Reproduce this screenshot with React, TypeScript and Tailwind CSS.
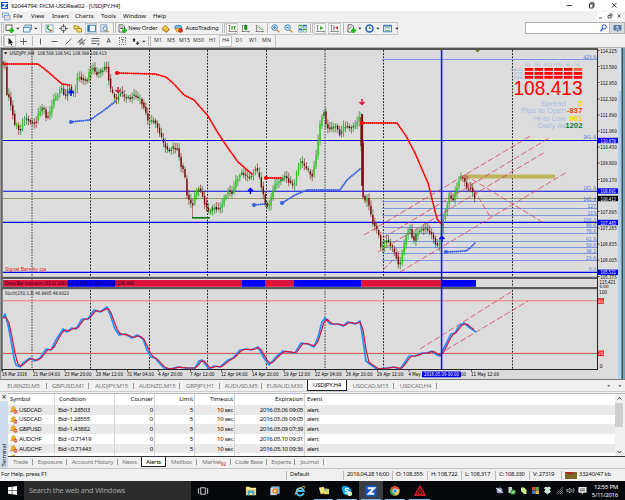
import React from 'react';
import { clsx } from 'clsx';

const PRICE_PATH: [number, number][] = [
  [3, 62], [6, 66], [7, 92], [10, 98], [12, 107], [14, 115], [16, 127], [18, 124], [20, 130], [22, 130], [24, 122],
  [28, 118], [33, 123], [37, 122], [40, 112], [44, 106], [47, 117], [50, 116], [54, 100], [58, 96], [62, 87], [66, 97],
  [70, 86], [73, 95], [77, 87], [79, 75], [83, 80], [88, 80], [91, 70], [94, 68], [97, 75], [101, 71], [105, 69],
  [107, 64], [109, 75], [111, 88], [114, 94], [118, 101], [121, 92], [126, 97], [131, 98], [136, 95], [141, 99],
  [145, 108], [149, 120], [155, 121], [160, 131], [164, 142], [169, 152], [174, 147], [179, 149], [181, 165],
  [185, 170], [188, 195], [190, 200], [193, 207], [196, 194], [200, 187], [203, 195], [206, 205], [210, 212],
  [214, 207], [220, 210], [224, 201], [229, 191], [233, 193], [237, 180], [243, 173], [248, 176], [252, 178],
  [256, 167], [260, 175], [263, 190], [267, 207], [270, 205], [273, 193], [277, 183], [281, 181], [285, 175],
  [290, 182], [294, 186], [298, 172], [301, 162], [307, 167], [313, 177], [316, 163], [319, 140], [322, 118],
  [325, 112], [327, 126], [331, 129], [336, 125], [341, 135], [345, 125], [350, 128], [355, 127], [360, 118],
  [361.5, 115], [363, 188], [365, 204], [368, 197], [371, 210], [373, 222], [377, 228], [380, 235], [382, 250],
  [385, 245], [388, 240], [393, 247], [397, 256], [400, 268], [404, 250], [407, 235], [409, 230], [412, 230],
  [414, 243], [418, 232], [422, 230], [427, 228], [431, 232], [435, 240], [438, 247], [441, 242], [443, 225],
  [446, 214], [448, 205], [450, 195], [454, 200], [457, 190], [460, 180], [463, 175], [466, 182], [468, 190],
  [471, 187], [476, 198],
];

const STOCH: [number, number][] = [
  [3, 318], [5, 314], [8, 325], [11, 340], [14, 358], [16, 365], [20, 367], [23, 363], [30, 358], [35, 361], [40, 358],
  [46, 349], [51, 350], [56, 340], [63, 329], [67, 332], [72, 328], [76, 329], [82, 319], [88, 319], [94, 310],
  [100, 312], [107, 307], [111, 317], [115, 329], [119, 335], [125, 334], [132, 338], [137, 335], [143, 339],
  [147, 350], [151, 357], [155, 358], [160, 364], [164, 368], [170, 369], [178, 367], [185, 368], [195, 368],
  [199, 361], [202, 360], [205, 364], [209, 369], [214, 366], [220, 367], [228, 360], [233, 358], [240, 350],
  [246, 349], [251, 350], [258, 347], [264, 358], [269, 365], [276, 357], [283, 351], [295, 353], [301, 343],
  [308, 344], [314, 347], [318, 337], [322, 322], [325, 318], [330, 324], [338, 324], [343, 326], [348, 322],
  [355, 324], [360, 321], [363, 340], [366, 361], [371, 365], [377, 369], [387, 368], [393, 367], [400, 369],
  [405, 362], [409, 356], [415, 356], [422, 353], [427, 353], [432, 351], [437, 355], [440, 356], [443, 350],
  [447, 342], [451, 334], [455, 333], [459, 326], [464, 323], [470, 328], [476, 332],
];

function at(path: [number, number][], x: number) {
  for (let i = 1; i < path.length; i++) {
    const [x1, y1] = path[i];
    if (x <= x1) {
      const [x0, y0] = path[i - 1];
      return y0 + ((y1 - y0) * (Math.max(x, x0) - x0)) / (x1 - x0);
    }
  }
  return path[path.length - 1][1];
}

const BARS = Array.from({ length: 242 }, (_, i) => {
  const x = 3 + i * 1.957;
  const open = at(PRICE_PATH, x - 1) + Math.sin(i * 7.3) * 0.9;
  const close = at(PRICE_PATH, x + 1) + Math.sin(i * 4.1) * 1.1;
  const up = close < open;
  const top = Math.min(open, close);
  const h = Math.max(1.4, Math.abs(close - open));
  const strong = Math.abs(at(PRICE_PATH, x + 3) - at(PRICE_PATH, x - 3)) > 6;
  const fill = up ? (strong ? '#2fd01c' : '#1c7d1c') : i % 4 === 1 && !strong ? '#111' : '#7c0d0d';
  return { x, top, h, fill, wick: up || i % 3 === 0 ? '#2f8f2f' : '#8c3a34', up: 1.5 + Math.abs(Math.sin(i * 2.7)) * 4, dn: 1 + Math.abs(Math.cos(i * 3.9)) * 4 };
});

const SIGNAL = Array.from({ length: 158 }, (_, i) => {
  const x = 3 + i * 3;
  const y = (at(STOCH, x - 3) + at(STOCH, x - 2) + at(STOCH, x)) / 3;
  return `${x},${y.toFixed(1)}`;
}).join(' ');

const GRID = [90.5, 149.5, 207.5, 266.5, 383.5, 512.5];

const FIBS: [number, string][] = [
  [59.5, '423.6'], [201.5, '141.4'], [208.5, '127'], [215.5, '113'], [222.5, '100.0'], [227.5, '88.6'],
  [233.5, '78.6'], [241.5, '61.8'], [247.5, '50.0'], [253.5, '38.2'], [260.5, '23.6'],
];

const PRICES: [number, string][] = [
  [50.5, '114.225'], [66.5, '113.580'], [82.5, '112.950'], [99, '112.320'], [115, '111.690'], [131, '111.060'],
  [147, '110.430'], [163, '109.800'], [179.5, '109.170'], [211.5, '107.895'], [228, '107.265'],
  [244, '106.635'], [260, '106.005'], [276.5, '105.375'],
];

const PRICE_TAGS: [number, string, string][] = [
  [140.5, '110.678', '#0000f0'], [191, '108.691', '#0000f0'], [198.5, '108.413', '#000'],
  [222.5, '107.465', '#0000f0'], [272.3, '105.521', '#0000f0'],
];

const DATES: [number, string, number][] = [
  [2, '16 Mar 2016', 25], [33, '21 Mar 04:00', 27], [64.5, '23 Mar 20:00', 27], [96, '28 Mar 12:00', 27],
  [127, '31 Mar 04:00', 27], [158, '4 Apr 20:00', 24.5], [190, '7 Apr 12:00', 24.5], [221, '12 Apr 04:00', 26.5],
  [252, '14 Apr 20:00', 26.5], [283.5, '19 Apr 12:00', 26.5], [315, '22 Apr 04:00', 26.5], [346, '26 Apr 20:00', 26.5],
  [377, '29 Apr 12:00', 26.5], [408.5, '4 May', 12], [471, '11 May 12:00', 28],
];

const TRENDS: [number, number, number, number][] = [
  [364, 235, 532, 135], [383, 238, 549, 138], [378, 252, 545, 152], [400, 272, 567, 172],
  [383, 270, 402, 251], [465, 175, 544, 223], [465, 175, 491, 218], [420, 349, 511, 292], [446, 350, 528, 301],
];

const DOTTED: [string, string, boolean][] = [
  ['3,64 38,64 47,71 62,84 70,85', '#ff0000', false],
  ['117,73 155,74 166,77 174,84 184,95 194,100 208,116 218,133 228,148 238,162 252,174', '#ff0000', true],
  ['266,178 281,178', '#ff0000', true],
  ['362,123 397,123 406,136 415,153 428,183 434,207 437,219 443,226', '#ff0000', true],
  ['71,122 79,121 90,120 103,111 116,101', '#3a62e0', true],
  ['254,205 265,204', '#3a62e0', true],
  ['282,203 295,195 307,190 340,190 347,180 360,169', '#3a62e0', true],
  ['446,252 466,251 470,248 476,242', '#3a62e0', true],
];

const DEEP: [number, number, string][] = [
  [3, 68, '#dc143c'], [68, 115, '#0000ff'], [115, 242, '#dc143c'], [242, 265, '#0000ff'], [265, 294, '#dc143c'],
  [294, 361, '#0000ff'], [361, 441, '#dc143c'], [441, 476, '#0000ff'],
];

const STATS: [string, string, string][] = [
  ['Spread', '5', '#ffd700'], ['Pips to Open', '-837', '#ff4500'], ['Hi to Low', '961', '#ffd700'], ['Daily Av', '1202', '#0b7a3c'],
];

const ALERTS = [
  ['USDCAD', 'Bid>1.28503', '2016.05.06 09:05'],
  ['USDCAD', 'Bid>1.28555', '2016.05.06 09:05'],
  ['GBPUSD', 'Bid>1.43882', '2016.05.09 07:39'],
  ['AUDCHF', 'Bid <0.71419', '2016.05.10 09:31'],
  ['AUDCHF', 'Bid <0.71443', '2016.05.10 09:36'],
  ['EURUSD', 'Bid>1.15280', '2016.05.10 10:12'],
];

function Chart() {
  return (
    <svg className="block w-[625px] h-[332px] shrink-0" viewBox="0 48 625 332" fontFamily="'DejaVu Sans Condensed','DejaVu Sans',sans-serif">
      <rect x="0" y="48" width="625" height="332" fill="#dcdcdc" />
      <rect x="0" y="48" width="598" height="2" fill="#555" />
      <rect x="0" y="48" width="1.2" height="332" fill="#999" />
      <rect x="1.2" y="48" width="1.4" height="323" fill="#4a4a4a" />

      {[32, 325].map(x => (
        <line key={x} x1={x} x2={x} y1="50" y2="369" stroke="#777" strokeWidth="1.6" strokeDasharray="1.6 1.2" />
      ))}
      {GRID.map(x => (
        <line key={x} x1={x} x2={x} y1="50" y2="369" stroke="#222" strokeWidth="1" strokeDasharray="1.8 1.4" />
      ))}

      <line x1="3" x2="597" y1="198.5" y2="198.5" stroke="#8a8a4a" strokeWidth="0.8" />
      {FIBS.map(([y, label]) => (
        <g key={label}>
          <line x1="382" x2="597" y1={y} y2={y} stroke="#6f8fdc" strokeWidth="0.9" />
          <text x="596" y={y - 0.8} fontSize="5" textAnchor="end" fill="#4a6fd8">{label}</text>
        </g>
      ))}
      {[139.6, 192.2].map(y => <line key={y} x1="3" x2="597" y1={y - 0.4} y2={y - 0.4} stroke="#f4f4c8" strokeWidth="0.8" />)}
      {[140.5, 191.3, 222.4, 272.4].map(y => (
        <line key={y} x1="3" x2="598" y1={y} y2={y} stroke="#0000e8" strokeWidth="1.1" />
      ))}
      <text x="596" y="139.4" fontSize="5" textAnchor="end" fill="#4a6fd8">261.8</text>
      <text x="596" y="190" fontSize="5" textAnchor="end" fill="#4a6fd8">161.8</text>
      <text x="596" y="271.2" fontSize="5" textAnchor="end" fill="#4a6fd8">0.0</text>

      <rect x="465" y="174.5" width="90" height="4" fill="#bdb45c" />

      {BARS.map(b => (
        <g key={b.x}>
          <line x1={b.x} x2={b.x} y1={b.top - b.up} y2={b.top + b.h + b.dn} stroke={b.wick} strokeWidth="0.75" />
          <rect x={b.x - 0.7} y={b.top} width="1.4" height={b.h} fill={b.fill} />
        </g>
      ))}
      <rect x="361.2" y="114" width="1.9" height="72" fill="#7c0d0d" />
      <line x1="192.5" x2="192.5" y1="205" y2="217" stroke="#b04040" strokeWidth="0.7" />
      <rect x="192" y="217" width="18" height="1.6" fill="#0a7a0a" />

      {DOTTED.map(([pts, color, dot]) => (
        <g key={pts}>
          <polyline points={pts} fill="none" stroke={color} strokeWidth="1" opacity="0.45" />
          <polyline points={pts} fill="none" stroke={color} strokeWidth="1.9" strokeLinecap="round" strokeDasharray="0.1 2" />
          {dot && <circle cx={pts.split(',')[0]} cy={pts.split(',')[1].split(' ')[0]} r="2.1" fill={color} />}
        </g>
      ))}

      {TRENDS.map(([x1, y1, x2, y2]) => (
        <line key={`${x1}-${y1}-${x2}`} x1={x1} y1={y1} x2={x2} y2={y2} stroke="#d9405a" strokeWidth="0.8" strokeDasharray="6 2.5" />
      ))}

      {[[118, 90], [362, 102]].map(([x, y]) => (
        <path key={x} d={`M${x} ${y - 3}v5M${x - 2.5} ${y}l2.5 2.5 2.5-2.5`} fill="none" stroke="#dc143c" strokeWidth="1.5" />
      ))}
      {[[71, 93], [250.5, 191], [442, 239]].map(([x, y]) => (
        <path key={x} d={`M${x} ${y + 3}v-5M${x - 2.5} ${y}l2.5-2.5 2.5 2.5`} fill="none" stroke="#0000ff" strokeWidth="1.5" />
      ))}
      <path d="M475 50h5l-2.5 2.5z" fill="#7d7d20" />

      <path d="M4 52.300h3.400l-1.700 2.200z" fill="#111" />
      <text x="9.500" y="55.2" fontSize="5.2" fill="#111" textLength="25" lengthAdjust="spacingAndGlyphs">USDJPY,H4</text>
      <text x="37.500" y="55.2" fontSize="5.2" fill="#111" textLength="69" lengthAdjust="spacingAndGlyphs">108.508 108.541 108.399 108.413</text>
      <text x="5" y="271" fontSize="5.8" fill="#e01818" textLength="41" lengthAdjust="spacingAndGlyphs" fontFamily="'Liberation Sans',sans-serif">Signal Bars by cja</text>

      <g fontFamily="'Liberation Sans',sans-serif">
        {['M1', 'M5', 'M15', 'M30', 'H1', 'H4'].map((t, i) => (
          <g key={t}>
            <text x={527.8 + i * 10} y="65.7" fontSize="4" textAnchor="middle" fill="#a3b8d6">{t}</text>
            {[68, 72, 75.9].map(y => (
              <rect key={y} x={524.8 + i * 9.8} y={y} width="8.4" height="2.8" fill={i === 5 && y === 68 ? '#ff5533' : '#ff0000'} />
            ))}
          </g>
        ))}
        {['MACD', 'STR', 'EMA'].map((t, i) => (
          <text key={t} x="522.5" y={71 + i * 4} fontSize="4" textAnchor="end" fill="#a3b8d6">{t}</text>
        ))}
        <text x="513.5" y="95.4" fontSize="20" fill="#ff0000" textLength="69" lengthAdjust="spacingAndGlyphs">108.413</text>
        {STATS.map(([label, value, color], i) => (
          <g key={label} fontSize="7.8">
            <text x="566" y={106 + i * 7.3} textAnchor="end" fill="#a9bfdf">{label}</text>
            <text x="582.5" y={106 + i * 7.3} textAnchor="end" fill={color} fontWeight="bold">{value}</text>
          </g>
        ))}
      </g>

      {/* Deep bar indicator */}
      <rect x="2" y="276.8" width="596" height="2.2" fill="#5a5a5a" />
      {DEEP.map(([x0, x1, fill]) => <rect key={x0} x={x0} y="280" width={x1 - x0} height="6.8" fill={fill} />)}
      <rect x="2" y="287" width="596" height="2.2" fill="#5a5a5a" />
      <text x="5" y="285.2" fontSize="5" fill="#150018" textLength="129" lengthAdjust="spacingAndGlyphs">Deep Bar Indicator (33.1) 106.960 -1.000 -1.000 -1.000 106.960</text>

      {/* Stochastic */}
      <line x1="3" x2="597" y1="300.8" y2="300.8" stroke="#ee7a7a" strokeWidth="1" />
      <line x1="3" x2="597" y1="354.4" y2="354.4" stroke="#a9e4e4" strokeWidth="0.9" />
      <line x1="3" x2="597" y1="353.4" y2="353.4" stroke="#e84848" strokeWidth="1" />
      <polyline points={STOCH.map(p => p.join(',')).join(' ')} fill="none" stroke="#1e90ff" strokeWidth="1.7" strokeLinejoin="round" />
      <polyline points={SIGNAL} fill="none" stroke="#dc143c" strokeWidth="1.2" />
      <text x="5" y="294.8" fontSize="5.2" fill="#111" textLength="64" lengthAdjust="spacingAndGlyphs">Stoch(150,3,3) 46.9905 48.6023</text>

      <rect x="440.8" y="50" width="1.6" height="319" fill="#1616e8" />
      <line x1="2" x2="598" y1="369.5" y2="369.5" stroke="#222" />
      <line x1="597.5" x2="597.5" y1="49" y2="370" stroke="#222" />

      <g fontSize="5.5">
        {PRICES.map(([y, label]) => (
          <g key={label}>
            <line x1="598" x2="599.5" y1={y} y2={y} stroke="#222" strokeWidth="0.8" />
            <text x="600.2" y={y + 2} fill="#000" textLength="16.5" lengthAdjust="spacingAndGlyphs">{label}</text>
          </g>
        ))}
        {PRICE_TAGS.map(([y, label, fill]) => (
          <g key={label}>
            <rect x="598" y={y - 2.7} width="20" height="5.4" fill={fill} />
            <text x="600.5" y={y + 2} fill="#fff" textLength="15.5" lengthAdjust="spacingAndGlyphs">{label}</text>
          </g>
        ))}
        <text x="599.5" y="283.8" fill="#000" textLength="16" lengthAdjust="spacingAndGlyphs">115.421</text>
        <text x="599.5" y="287.500" fill="#000" fontSize="4.5">0.00</text>
        <text x="599" y="294.2" fill="#000" textLength="8" lengthAdjust="spacingAndGlyphs">100</text>
        <text x="599.5" y="368.3" fill="#000">0</text>
        {[[301, '85'], [353.3, '20']].map(([y, t]) => (
          <g key={t}>
            <rect x="598" y={Number(y) - 2.8} width="6" height="5.6" fill="#f01818" />
            <text x="598.3" y={Number(y) + 1.8} fill="#fff" fontSize="4.6">{t}</text>
          </g>
        ))}
        {DATES.map(([x, label, w]) => (
          <g key={label}>
            <line x1={x + 0.5} x2={x + 0.5} y1="370" y2="371.5" stroke="#222" strokeWidth="0.8" />
            <text x={x} y="376.3" fill="#000" textLength={w} lengthAdjust="spacingAndGlyphs">{label}</text>
          </g>
        ))}
        <text x="461" y="376.3" fill="#000" textLength="5" lengthAdjust="spacingAndGlyphs">00</text>
        <rect x="422" y="371.5" width="39" height="5.8" fill="#0000e8" />
        <text x="424" y="376.3" fill="#fff" textLength="35" lengthAdjust="spacingAndGlyphs">2016.05.09 00:00</text>
      </g>

      <rect x="618.3" y="47" width="3.2" height="333" fill="#a9cfee" />
      <rect x="618.3" y="47" width="3.2" height="44" fill="#d6e6f4" />
      <rect x="621.5" y="47" width="1.7" height="333" fill="#3c4a52" />
      <rect x="623.2" y="47" width="1.8" height="333" fill="#6fa3b4" />
      <rect x="0" y="379" width="625" height="1" fill="#777" />
    </svg>
  );
}

function Slot({ w, on, children }: { w: string; on?: boolean; children?: React.ReactNode }) {
  return (
    <div className={clsx('h-full shrink-0 flex items-center justify-center whitespace-nowrap', w, on && 'bg-[#f9f9f9] border border-[#c8c8c8]')}>
      {children}
    </div>
  );
}

function Icon({ children, stroke = '#555' }: { children: React.ReactNode; stroke?: string }) {
  return (
    <svg className="w-[9px] h-[9px] shrink-0" viewBox="0 0 9 9" fill="none" stroke={stroke} strokeWidth="0.9">
      {children}
    </svg>
  );
}

const Caret = () => <svg className="w-[4px] h-[3px]" viewBox="0 0 4 3"><path d="M.3.700h3.200L1.900 2.500z" fill="#222" /></svg>;
const Sep = () => <div className="w-px h-[10px] bg-[#b8b8b8] shrink-0" />;
const Grip = () => <div className="w-[3px] h-[10px] border-x border-[#bbb] shrink-0" />;
const Plus = () => <path d="M6.5 4v5M4 6.5h5" stroke="#12b512" strokeWidth="1.9" />;
const Axis = () => <path d="M1.5 1v7M0.5 7.5h8M.7 2l.8-1 .8 1M7.5 6.7l1 .8-1 .8" stroke="#666" strokeWidth="0.7" />;

function MainToolbar() {
  return (
    <div className="h-[14px] shrink-0 flex items-center">
      <div className="h-[13px] w-[398px] shrink-0 border border-l-0 border-[#c6c6c6] flex items-center text-[6px] tracking-[-0.15px] text-[#111]">
        <Slot w="w-[4px]"><Grip /></Slot>
        <Slot w="w-[11px]"><Icon><rect x="1" y="1" width="6" height="5.5" fill="#f8fff8" /><Plus /></Icon></Slot>
        <Slot w="w-[6px]"><Caret /></Slot>
        <Slot w="w-[12px]"><Icon stroke="#5a8ab8"><rect x="2" y="1" width="6.5" height="4.5" fill="#cfe2f3" /><rect x=".5" y="3.5" width="6.5" height="4.5" fill="#e8f1fa" /></Icon></Slot>
        <Slot w="w-[6px]"><Caret /></Slot>
        <Slot w="w-[4px]"><Sep /></Slot>
        <Slot w="w-[13px]"><Icon stroke="#79a4c8"><rect x="1" y="1" width="7" height="7" fill="#fff" /><path d="M2 3l2-1M2 4l4 3" stroke="#20a020" strokeWidth="1.5" /><path d="M5 6.5h2" stroke="#e04030" strokeWidth="1.3" /></Icon></Slot>
        <Slot w="w-[14px]"><Icon><circle cx="4.5" cy="4.5" r="2.6" /><path d="M4.5 0v3.4M4.5 5.6V9M0 4.5h3.4M5.6 4.5H9" /></Icon></Slot>
        <Slot w="w-[15px]"><Icon stroke="#b08a20"><path d="M1 1.5h2l.6.8H6V5H1z" fill="#f3d04e" /><path d="M4 4.5h4.5V8H4z" fill="#ffe27a" /></Icon></Slot>
        <Slot w="w-[12px]" on><Icon stroke="#2b6dad"><rect x=".8" y="1.2" width="7.6" height="6.6" fill="#fff" /><rect x="1" y="1.4" width="1.8" height="6" fill="#2b6dad" stroke="none" /></Icon></Slot>
        <Slot w="w-[15px]"><Icon stroke="#7a9cc0"><rect x=".8" y=".8" width="6" height="7" fill="#dfeaf5" /><circle cx="5" cy="4.5" r="2" fill="#fff" stroke="#4b7cb4" /><path d="M6.5 6l2 2.3" stroke="#d0962a" strokeWidth="1.3" /></Icon></Slot>
        <Slot w="w-[5px]"><Grip /></Slot>
        <Slot w="w-[11px]"><Icon><path d="M1 .8h4l1.5 1.5V8H1z" fill="#fff" /><path d="M2.2 3h3M2.2 4.5h3" /><Plus /></Icon></Slot>
        <Slot w="w-[30px]"><span>New Order</span></Slot>
        <Slot w="w-[15px]"><Icon stroke="#a67c17"><path d="M4 1.5L8.3 5 5.5 7.8.8 4.8z" fill="#f2c53d" /><path d="M1 5.5l4.5 2.9L8.3 5.8" /></Icon></Slot>
        <Slot w="w-[11px]"><Icon stroke="#3884bf"><ellipse cx="4.3" cy="3.6" rx="3.7" ry="2.4" fill="#67b7ec" /><circle cx="4" cy="6" r="2" fill="#f3d057" stroke="#c69a20" /><circle cx="6.6" cy="6.4" r="1.9" fill="#e23b2a" stroke="#b81c10" /></Icon></Slot>
        <Slot w="w-[36px]"><span>AutoTrading</span></Slot>
        <Slot w="w-[6px]"><Grip /></Slot>
        <Slot w="w-[12px]" on><Icon><Axis /><path d="M4 2v4M4 3h1.5M6.5 2v4M6.5 2.5H8" stroke="#18a018" /></Icon></Slot>
        <Slot w="w-[14px]"><Icon><Axis /><path d="M4.8.5v6" stroke="#18a018" /><rect x="3.8" y="1.5" width="2" height="3.7" fill="#18b018" stroke="#0a800a" /></Icon></Slot>
        <Slot w="w-[14px]"><Icon><Axis /><path d="M2.5 3.5c1-2 2 0 3 1s2 .6 2.5.8" stroke="#18a018" /></Icon></Slot>
        <Slot w="w-[3px]"><Sep /></Slot>
        <Slot w="w-[12px]"><Icon stroke="#2f74b8"><circle cx="3.6" cy="3.6" r="2.8" fill="#d8eefc" /><path d="M2.2 3.6H5M3.6 2.2V5" /><path d="M5.8 5.8l2.5 2.5" stroke="#d0962a" strokeWidth="1.5" /></Icon></Slot>
        <Slot w="w-[14px]"><Icon stroke="#2f74b8"><circle cx="3.6" cy="3.6" r="2.8" fill="#d8eefc" /><path d="M2.2 3.6H5" /><path d="M5.8 5.8l2.5 2.5" stroke="#d0962a" strokeWidth="1.5" /></Icon></Slot>
        <Slot w="w-[14px]"><Icon stroke="none"><path d="M.5.8h3.8v3.5H.5z" fill="#3ea93e" /><path d="M4.9.8h3.8v3.5H4.9zM.5 4.8h3.8v3.5H.5z" fill="#2a67b2" /><path d="M4.9 4.8h3.8v3.5H4.9z" fill="#3ea93e" /><path d="M1 2.2h2.8v1.5H1zM5.4 2.2h2.8v1.5H5.4zM1 6.2h2.8v1.5H1zM5.4 6.2h2.8v1.5H5.4z" fill="#e8f4ff" /></Icon></Slot>
        <Slot w="w-[5px]"><Grip /></Slot>
        <Slot w="w-[12px]" on><Icon><Axis /><path d="M4.2 2v4l3-2z" fill="#18a018" stroke="none" /></Icon></Slot>
        <Slot w="w-[2px]" />
        <Slot w="w-[13px]" on><Icon><Axis /><path d="M4 1.5v5" /><path d="M8 2v3.6L5 3.8z" fill="#d03020" stroke="none" /></Icon></Slot>
        <Slot w="w-[4px]"><Sep /></Slot>
        <Slot w="w-[12px]"><Icon><path d="M1 .8h4l1.5 1.5V8H1z" fill="#fff" /><path d="M2.2 5.5c1.5-4 1 0 2.5-3" /><Plus /></Icon></Slot>
        <Slot w="w-[5px]"><Caret /></Slot>
        <Slot w="w-[14px]"><Icon stroke="#1c63b5"><circle cx="4.5" cy="4.5" r="3.5" fill="#eef6ff" strokeWidth="1.5" /><path d="M4.5 2.5v2.2H6" stroke="#333" strokeWidth=".7" /></Icon></Slot>
        <Slot w="w-[4px]"><Caret /></Slot>
        <Slot w="w-[15px]"><Icon stroke="#3d78b0"><rect x=".6" y="1.2" width="7.8" height="6.6" fill="#eef5fb" /><path d="M1 2h7" strokeWidth="1.3" /><path d="M1.8 4.5l2-.8 2 .5 1.5-.7M2 6.4h5" stroke="#3a9a3a" strokeWidth=".7" /></Icon></Slot>
        <Slot w="w-[4px]"><Caret /></Slot>
      </div>
      <div className="ml-auto h-[12px] w-[85px] bg-white border border-[#b4b4b4] flex items-center justify-end pr-[2px]">
        <svg className="w-[7px] h-[8px]" viewBox="0 0 7 8" fill="none" stroke="#2457d6"><circle cx="4.2" cy="2.8" r="2.1" /><path d="M2.7 4.5L.5 7.2" strokeWidth="1.4" /></svg>
      </div>
      <div className="h-[12px] w-[15px] bg-[#dcdcdc] border border-l-0 border-[#b4b4b4] flex items-center justify-center">
        <svg className="w-[9px] h-[9px]" viewBox="0 0 9 9"><path d="M.5 1h8v5.5H5.5L4.5 8.5l-.7-2H.5z" fill="#5577a8" /><text x="3" y="5.8" fontSize="5" fill="#fff" fontFamily="Liberation Sans,sans-serif">5</text></svg>
      </div>
    </div>
  );
}

function LineToolbar() {
  return (
    <div className="h-[13px] shrink-0 flex items-center text-[5.3px] text-[#333] border-b border-[#b0b0b0]">
      <div className="h-[12px] w-[276px] shrink-0 border-r border-[#c0c0c0] flex items-center">
        <Slot w="w-[4px]"><Grip /></Slot>
        <Slot w="w-[12px]" on><Icon stroke="none"><path d="M2.5.5v7l1.6-1.4 1 2.4 1.1-.5-1-2.3h2z" fill="#222" /></Icon></Slot>
        <Slot w="w-[14px]"><Icon><path d="M4.5 1v7M1 4.5h7" /></Icon></Slot>
        <Slot w="w-[4px]"><Sep /></Slot>
        <Slot w="w-[13px]"><Icon><path d="M4.5 1.500v6" /></Icon></Slot>
        <Slot w="w-[14px]"><Icon><path d="M1.500 4.5h6" /></Icon></Slot>
        <Slot w="w-[14px]"><Icon><path d="M1.5 7.5l6-6" /></Icon></Slot>
        <Slot w="w-[13px]"><Icon><path d="M.5 5.5l5-4.5M2.5 8l6-5.5M3 3v4M5 2v5" /><path d="M6 8.5V6h2M6 7.2h1.5" strokeWidth=".6" /></Icon></Slot>
        <Slot w="w-[14px]"><Icon><path d="M.5 1.5h8M.5 4h8M.5 6.5h5" /><path d="M7 8.8V6.4h1.7M7 7.5h1.3" strokeWidth=".6" /></Icon></Slot>
        <Slot w="w-[13px]"><span className="text-[6.5px]">A</span></Slot>
        <Slot w="w-[15px]"><div className="w-[7px] h-[8px] border border-dotted border-[#777] text-[5.5px] leading-[6px] text-center">T</div></Slot>
        <Slot w="w-[11px]"><Icon stroke="none"><path d="M3 1l2 2.3H3.8V5H2.2V3.3H1zM6.5 8L8.5 6H7.3V4.5H5.8V6h-1.2z" fill="#333" /></Icon></Slot>
        <Slot w="w-[5px]"><Caret /></Slot>
        <Slot w="w-[6px]"><Grip /></Slot>
        <Slot w="w-[12px]">M1</Slot>
        <Slot w="w-[14px]">M5</Slot>
        <Slot w="w-[13px]">M15</Slot>
        <Slot w="w-[15px]">M30</Slot>
        <Slot w="w-[13px]">H1</Slot>
        <Slot w="w-[13px]" on>H4</Slot>
        <Slot w="w-[14px]">D1</Slot>
        <Slot w="w-[14px]">W1</Slot>
        <Slot w="w-[13px]">MN</Slot>
      </div>
    </div>
  );
}

const Tab = ({ w, on, last, children }: { w: string; on?: boolean; last?: boolean; children: React.ReactNode }) => (
  <div
    className={clsx(
      'shrink-0 h-full flex items-center justify-center whitespace-nowrap relative leading-[8px]',
      w,
      on ? 'bg-white text-black border border-t-0 border-[#222]' : 'text-[#777]',
    )}
  >
    {children}
    {!on && !last && <span className="absolute right-0 w-px h-[6px] bg-[#999]" />}
  </div>
);

function ChartTabs() {
  return (
    <div className="h-[12px] shrink-0 flex bg-[#f0f0f0] text-[6.1px] tracking-[-0.25px] border-b border-[#ccc]">
      <Tab w="w-[47px]">EURNZD,M5</Tab>
      <Tab w="w-[42px]">GBPUSD,M1</Tab>
      <Tab w="w-[45px]">AUDJPY,M15</Tab>
      <Tab w="w-[46px]">AUDNZD,M15</Tab>
      <Tab w="w-[40px]">GBPJPY,H1</Tab>
      <Tab w="w-[42px]">AUDUSD,M5</Tab>
      <Tab w="w-[45px]" last>EURAUD,M30</Tab>
      <Tab w="w-[40px]" on>USDJPY,H4</Tab>
      <Tab w="w-[47px]">USDCAD,M15</Tab>
      <Tab w="w-[43px]">USDCAD,H4</Tab>
      <div className="ml-auto w-[15px] mr-[3px] flex items-center justify-between text-[5px] text-[#666]"><span>◂</span><span>▸</span></div>
    </div>
  );
}

const Bell = () => (
  <svg className="w-[8px] h-[8px] shrink-0 mr-[1px]" viewBox="0 0 8 8">
    <path d="M3.5.5C5 .8 5.3 2.5 5.5 4l1 1.8H.5L1.5 4C1.7 2 2 .8 3.5.5z" fill="#f0b428" stroke="#b07d10" strokeWidth=".5" />
    <circle cx="5.5" cy="5.8" r="2" fill="#e0492c" /><path d="M4.3 5.8h2.4" stroke="#fff" strokeWidth=".8" />
  </svg>
);

function AlertRow({ cells, head, shade }: { cells: string[]; head?: boolean; shade?: boolean }) {
  const cell = 'h-full flex items-center shrink-0 border-r border-[#d4d4d4]';
  return (
    <div className={clsx('flex shrink-0 text-[6.1px] text-[#111] whitespace-nowrap', head ? 'h-[11px] tracking-[-0.1px]' : 'h-[9.7px] tracking-[-0.32px]', shade ? 'bg-[#e9e9e9]' : 'bg-white')}>
      <div className={clsx(cell, 'w-[47px] pl-[2px]')}>{!head && <Bell />}{cells[0]}</div>
      <div className={clsx(cell, 'w-[60px]', head ? 'pl-[4px]' : 'pl-[3px]')}>{cells[1]}</div>
      <div className={clsx(cell, 'w-[40px] justify-end pr-px')}>{cells[2]}</div>
      <div className={clsx(cell, 'w-[40px] justify-end pr-px')}>{cells[3]}</div>
      <div className={clsx(cell, 'w-[40px] justify-end pr-px')}>{cells[4]}</div>
      <div className={clsx(cell, 'w-[70px] justify-end pr-px')}>{cells[5]}</div>
      <div className="flex items-center pl-[2px]">{cells[6]}</div>
    </div>
  );
}

function Terminal() {
  return (
    <div className="h-[77px] shrink-0 flex bg-[#f0f0f0] pt-px border-b border-[#c4c4c4]">
      <div className="w-[8px] shrink-0 flex flex-col items-center justify-between bg-[#cddcec]">
        <span className="w-full text-center bg-[#f0f0f0] text-[8px] leading-[7px] h-[8px] text-[#222]">×</span>
        <span className="[writing-mode:vertical-rl] rotate-180 text-[5.8px] tracking-[-0.15px] leading-[8px] mb-[1px] text-[#111]">Terminal</span>
      </div>
      <div className="flex-1 min-w-0 flex flex-col">
        <div className="h-[64px] shrink-0 flex border-b border-[#333] border-t border-t-[#bbb]">
          <div className="flex-1 h-full overflow-hidden flex flex-col">
            <AlertRow head cells={['Symbol', 'Condition', 'Counter', 'Limit', 'Timeout', 'Expiration', 'Event']} />
            {ALERTS.map(([symbol, condition, expires], i) => (
              <AlertRow key={condition} shade={i % 2 === 0} cells={[symbol, condition, '0', '5', '10 sec', expires, 'alert']} />
            ))}
          </div>
          <div className="w-[8px] mr-[2px] bg-[#f0f0f0] flex flex-col items-center">
            <svg className="w-[5px] h-[9px]" viewBox="0 0 5 9"><path d="M.7 5.5l1.8-2 1.8 2" fill="none" stroke="#333" /></svg>
            <div className="w-full h-[24px] bg-[#cdcdcd]" />
            <svg className="w-[5px] h-[8px] mt-auto" viewBox="0 0 5 8"><path d="M.7 3l1.8 2 1.8-2" fill="none" stroke="#333" /></svg>
          </div>
        </div>
        <div className="h-[10px] flex text-[6px] tracking-[-0.2px]">
          <Tab w="w-[25px]">Trade</Tab>
          <Tab w="w-[34px]">Exposure</Tab>
          <Tab w="w-[51px]">Account History</Tab>
          <Tab w="w-[23px]" last>News</Tab>
          <Tab w="w-[25px]" on>Alerts</Tab>
          <Tab w="w-[31px]">Mailbox</Tab>
          <Tab w="w-[34px]">Market<span className="text-[4.5px] leading-[5px] text-red-600 mt-[4px]">92</span></Tab>
          <Tab w="w-[36px]">Code Base</Tab>
          <Tab w="w-[28px]">Experts</Tab>
          <Tab w="w-[29px]">Journal</Tab>
        </div>
      </div>
    </div>
  );
}

function StatusBar() {
  const cell = 'h-[9px] shrink-0 border-l border-[#bbb] flex items-center pl-[3px]';
  return (
    <div className="h-[12px] shrink-0 flex items-center bg-[#f0f0f0] text-[5.9px] tracking-[-0.3px] text-[#111] whitespace-nowrap">
      <div className="w-[286px] pl-[1px] shrink-0 tracking-[-0.18px]">For Help, press F1</div>
      <div className={clsx(cell, 'w-[57px] tracking-[-0.15px]')}>Default</div>
      <div className={clsx(cell, 'w-[49px]')}>2016.04.28 16:00</div>
      <div className={clsx(cell, 'w-[35px]')}>O: 108.355</div>
      <div className={clsx(cell, 'w-[34px]')}>H: 108.722</div>
      <div className={clsx(cell, 'w-[34px]')}>L: 108.317</div>
      <div className={clsx(cell, 'w-[34px]')}>C: 108.330</div>
      <div className={clsx(cell, 'w-[32px]')}>V: 27319</div>
      <div className={clsx(cell, 'gap-[2px] tracking-[-0.2px]')}>
        <svg className="w-[12px] h-[7px]" viewBox="0 0 12 7"><path d="M0 0h12v7H0z" fill="#a82a20" /><path d="M1 1v6M3 2v5M5 3v4M7 1.5v5.5M9 .5v6.5M11 0v7" stroke="#4fa02e" strokeWidth="1.1" /></svg>
        33240/47 kb
      </div>
    </div>
  );
}

function TaskIcon({ w, live, active, children }: { w: string; live?: boolean; active?: boolean; children: React.ReactNode }) {
  return (
    <div className={clsx('h-full shrink-0 flex items-center justify-center relative', w, active && 'bg-[#3a3d42]')}>
      <svg className="w-[12px] h-[12px]" viewBox="0 0 13 13">{children}</svg>
      {live && <span className="absolute bottom-0 inset-x-[2px] h-px bg-[#76b9ed]" />}
    </div>
  );
}

function Taskbar() {
  return (
    <div className="h-[19px] shrink-0 bg-[#06080b] flex items-center text-white">
      <div className="w-[24px] h-full flex items-center justify-center shrink-0">
        <svg className="w-[9px] h-[9px]" viewBox="0 0 9 9" fill="#fff"><path d="M0 1.3l3.8-.5v3.4H0zM4.3.7L9 0v4.2H4.3zM0 4.7h3.8v3.5L0 7.7zM4.3 4.7H9V9l-4.7-.7z" /></svg>
      </div>
      <div className="w-[167px] h-full shrink-0 bg-[#2c2c2c] flex items-center pl-[5px] text-[7.3px] tracking-[-0.17px] text-[#a5a5a5] whitespace-nowrap">Search the web and Windows</div>
      <TaskIcon w="w-[24px]"><path d="M4 3h5v7H4zM2.5 4h-1v5h1M10.5 4h1v5h-1" fill="none" stroke="#eee" strokeWidth=".9" /></TaskIcon>
      <div className="w-[24px] shrink-0" />
      <TaskIcon w="w-[24px]"><path d="M1 2h4l1 1h6v8H1z" fill="#f6d465" /><path d="M3 6h7v5H8V8.500H5V11H3z" fill="#3ba3dc" /><path d="M1 4h11" stroke="#fff3b5" /></TaskIcon>
      <TaskIcon w="w-[24px]"><rect x="2.500" y="1.500" width="9" height="8" fill="#7fb8dc" /><rect x="1.500" y="3" width="7" height="8" fill="#c8d8e4" /><circle cx="6.500" cy="6.500" r="3" fill="#f08020" /><path d="M5.600 5v3l2.500-1.500z" fill="#fff" /></TaskIcon>
      <TaskIcon w="w-[25px]"><path d="M10.500 8.800A4 4 0 1 1 10.600 6.500H4" fill="none" stroke="#53c3f2" strokeWidth="2" /><path d="M1.500 11C0 9 6 2 11.500 1.500c1 .5 0 2-.5 2.500" fill="none" stroke="#f2c53d" strokeWidth=".9" /></TaskIcon>
      <TaskIcon w="w-[23px]" live><path d="M1 3l5-1 3 6-6 2z" fill="#f3e27a" /><path d="M7 4h5v6H6z" fill="#e2d25a" /><path d="M7 4h3v3H7z" fill="#9cc7a0" /></TaskIcon>
      <TaskIcon w="w-[24px]" live><circle cx="4" cy="4" r="3.200" fill="#12a5e8" /><circle cx="6.300" cy="6.300" r="4.700" fill="#12a5e8" /><path d="M8.200 4.600C7.500 3.200 4.500 3.400 4.600 5c.1 1.500 3.400 1 3.500 2.600.1 1.500-3 1.700-3.700.2" fill="none" stroke="#fff" strokeWidth="1.200" /><circle cx="9.500" cy="9.500" r="2.600" fill="#dcebc4" /></TaskIcon>
      <TaskIcon w="w-[24px]" live active><rect x=".5" y=".5" width="12" height="12" fill="#1456c8" /><path d="M3 3.500h7L4 9.500h6" fill="none" stroke="#fff" strokeWidth="2" /></TaskIcon>
      <TaskIcon w="w-[24px]" live><circle cx="6.500" cy="6.500" r="5.200" fill="#e3b82c" /><path d="M6.500 6.500L2 3.900A5.200 5.200 0 0 1 11.200 4.200H6.500z" fill="#dd4233" /><path d="M6.500 6.500L2 3.900A5.200 5.200 0 0 0 6.300 11.700z" fill="#35a352" /><circle cx="6.500" cy="6.500" r="2.400" fill="#3f82ee" stroke="#fff" strokeWidth=".8" /></TaskIcon>
      <TaskIcon w="w-[25px]" live><path d="M6.500 1.500L12 11H1z" fill="none" stroke="#d01c24" strokeWidth="1.700" /><path d="M6.500 5.500L9 9.500H4z" fill="none" stroke="#d01c24" /></TaskIcon>
      <div className="ml-auto flex items-center mr-[3px]">
        <Slot w="w-[12px]"><Icon stroke="none"><circle cx="4.500" cy="4.500" r="3" fill="#7f8fc8" /><path d="M1 2l7 5" stroke="#fff" /><circle cx="4.500" cy="4.500" r="1.200" fill="#fff" /></Icon></Slot>
        <Slot w="w-[12px]"><Icon stroke="none"><rect x="1.500" y="1" width="3.500" height="6" fill="#ccc" /><circle cx="6" cy="6" r="2.600" fill="#3caa3c" /><path d="M4.800 6l1 1 1.500-2" stroke="#fff" /></Icon></Slot>
        <Slot w="w-[12px]"><Icon stroke="none"><path d="M2 1.500h3l2.500 2.500v4H5L2 5z" fill="#c8f08c" /></Icon></Slot>
        <Slot w="w-[12px]"><Icon stroke="none"><path d="M1 1h3.500v3.500H1z" fill="#e34a2a" /><path d="M4.500 1H8v3.500H4.500z" fill="#59a83a" /><path d="M1 4.500h3.500V8H1z" fill="#2f77c9" /><path d="M4.500 4.500H8V8H4.500z" fill="#e9b52c" /></Icon></Slot>
        <Slot w="w-[12px]"><Icon stroke="#fff"><path d="M1.500 2l2-1 1 1.200 1-1.200 2 1L6 3.800l1.500 1.800-3 2.200-3-2.200L3 3.800z" fill="#bfe8d0" /></Icon></Slot>
        <Slot w="w-[12px]"><Icon stroke="#999"><path d="M1 8L8 1M3 8l5-5M5 8l3-3M7 8l1-1" strokeWidth=".7" /></Icon></Slot>
        <Slot w="w-[11px]"><Icon stroke="#ddd"><path d="M.8 3.500h1.500L4 2v5L2.300 5.500H.8zM5.500 3c.8 1 .8 2 0 3M7 2c1.300 1.500 1.300 3.500 0 5" strokeWidth=".7" /></Icon></Slot>
        <Slot w="w-[13px]"><Icon stroke="none"><path d="M.5 1h8v5.800H5.500L3.800 8.600V6.800H.5z" fill="#eee" /><path d="M2 3h5M2 4.800h5" stroke="#222" strokeWidth=".7" /></Icon></Slot>
        <div className="w-[27px] flex flex-col items-end text-[6px] tracking-[-0.25px] leading-[8px] whitespace-nowrap ml-[2px] mr-[4px]">
          <div>12:55 PM</div>
          <div>5/11/2016</div>
        </div>
      </div>
    </div>
  );
}

export default function App() {
  return (
    <div className="w-[625px] h-[500px] overflow-hidden flex flex-col bg-[#f0f0f0] font-['Noto_Sans','Open_Sans',sans-serif] leading-none">
      <div className="h-[11px] shrink-0 bg-white flex items-center text-[6px] tracking-[-0.24px] text-[#111]">
        <svg className="w-[7px] h-[7px] ml-[1px] mr-[3px]" viewBox="0 0 7 7"><rect width="7" height="7" fill="#1456c8" /><path d="M1.300 1.700h4.200l-3.700 3.600h4" fill="none" stroke="#fff" strokeWidth="1.200" /></svg>
        <span>92044794: FXCM-USDReal02 - [USDJPY,H4]</span>
        <svg className="w-[50px] h-[7px] ml-auto mr-[8px]" viewBox="0 0 50 7" fill="none" stroke="#222" strokeWidth=".9">
          <path d="M0 3.500h5M22.500 2h3.500v4h-3.500zM23.500 2V.8h3.500v4H26M45 1l4.500 4.500M49.500 1L45 5.500" />
        </svg>
      </div>
      <div className="h-[10px] shrink-0 flex items-center text-[6.1px] text-[#111]">
        <div className="w-[13px] shrink-0 pl-[2px]"><Icon stroke="#7aa8d8"><rect x=".5" y="1" width="6" height="4" fill="#d8e8f8" /><rect x="2.500" y="3.500" width="5.500" height="4.500" fill="#f0d8d8" /></Icon></div>
        <div className="w-[18px]">File</div>
        <div className="w-[21px]">View</div>
        <div className="w-[23px]">Insert</div>
        <div className="w-[26px]">Charts</div>
        <div className="w-[22px]">Tools</div>
        <div className="w-[30px]">Window</div>
        <div>Help</div>
        <svg className="w-[28px] h-[8px] ml-auto" viewBox="0 0 28 8" fill="none" stroke="#444" strokeWidth=".9">
          <path d="M0 0h26v8H0z" fill="#fff" stroke="none" /><path d="M2 6h3M11 3.500h3v2.500h-3zM12 2h3v2.500M20.500 2.500l3 3M23.500 2.500l-3 3" />
        </svg>
      </div>
      <MainToolbar />
      <LineToolbar />
      <Chart />
      <ChartTabs />
      <Terminal />
      <StatusBar />
      <Taskbar />
    </div>
  );
}
